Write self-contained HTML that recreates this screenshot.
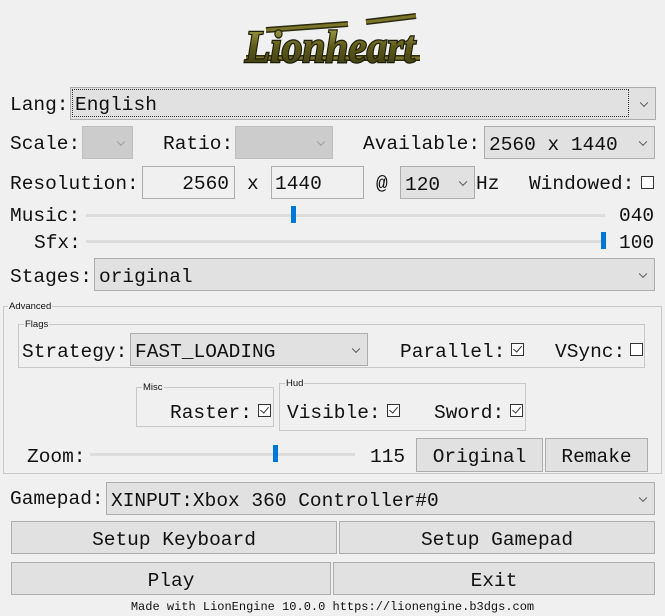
<!DOCTYPE html>
<html><head><meta charset="utf-8"><style>
body{margin:0;width:665px;height:616px;background:#f0f0f0;position:relative;overflow:hidden;font-family:"Liberation Mono",monospace;font-size:19.5px;color:#111}
.a{position:absolute;white-space:pre;line-height:1}
.cb{position:absolute;background:#e1e1e1;border:1px solid #adadad;box-sizing:border-box}
.cb.d{background:#cccccc;border-color:#bfbfbf}
.cb .t{position:absolute;left:4px;top:6px;white-space:pre}
.cb:after{content:"";position:absolute;right:8px;top:50%;width:5px;height:5px;border-right:1px solid #555;border-bottom:1px solid #555;transform:translateY(-70%) rotate(45deg)}
.cb.d:after{border-color:#999}
.ed{position:absolute;background:#f0f0f0;border:1px solid #adadad;box-sizing:border-box}
.btn{position:absolute;background:#e1e1e1;border:1px solid #adadad;box-sizing:border-box;text-align:center}
.btn span{position:relative;top:7px}
.chk{position:absolute;width:13px;height:13px;border:1px solid #333;box-sizing:border-box;background:#fff}
.chk.c:after{content:"";position:absolute;left:3px;top:0px;width:4px;height:7px;border-right:1px solid #333;border-bottom:1px solid #333;transform:rotate(40deg)}
.grp{position:absolute;border:1px solid #c8c8c8;box-sizing:border-box}
.gl{position:absolute;font-family:"Liberation Sans",sans-serif;font-size:9.5px;background:#f0f0f0;padding:0 1px;line-height:1}
.tr{position:absolute;height:3px;background:#dcdcdc}
.th{position:absolute;width:5px;height:17px;background:#0078d7}
</style></head><body>
<svg class="a" style="left:238px;top:6px" width="190" height="70" viewBox="0 0 190 70">
<defs><linearGradient id="g" x1="0" y1="0" x2="0" y2="1"><stop offset="0" stop-color="#b9b45a"/><stop offset=".5" stop-color="#5d5a1a"/><stop offset="1" stop-color="#3a3814"/></linearGradient></defs>
<path d="M8 52 L182 52 M28 24 L110 18 M128 16 L178 10" stroke="#2c2a10" stroke-width="6" fill="none"/>
<path d="M8 52 L182 52 M28 24 L110 18 M128 16 L178 10" stroke="#7a7528" stroke-width="3" fill="none"/>
<text x="92" y="56" text-anchor="middle" textLength="170" lengthAdjust="spacingAndGlyphs" font-family="Liberation Serif,serif" font-style="italic" font-weight="bold" font-size="46" fill="url(#g)" stroke="#1e1c08" stroke-width="2.5" paint-order="stroke">Lionheart</text>
</svg>

<div class="a" style="left:10px;top:96px">Lang:</div>
<div class="cb" style="left:70px;top:87px;width:586px;height:33px"><span class="t" style="outline:1px dotted #333;top:2px;left:2px;padding:4px 2px;width:555px;height:26px;box-sizing:border-box;padding-top:4px">English</span></div>

<div class="a" style="left:10px;top:135px">Scale:</div>
<div class="cb d" style="left:82px;top:126px;width:51px;height:33px"></div>
<div class="a" style="left:163px;top:135px">Ratio:</div>
<div class="cb d" style="left:235px;top:126px;width:98px;height:33px"></div>
<div class="a" style="left:363px;top:135px">Available:</div>
<div class="cb" style="left:484px;top:126px;width:171px;height:33px"><span class="t" style="top:7px">2560 x 1440</span></div>

<div class="a" style="left:10px;top:175px">Resolution:</div>
<div class="ed" style="left:142px;top:166px;width:93px;height:33px"><span class="a" style="right:5px;top:8px">2560</span></div>
<div class="a" style="left:247px;top:175px">x</div>
<div class="ed" style="left:271px;top:166px;width:93px;height:33px"><span class="a" style="left:3px;top:8px">1440</span></div>
<div class="a" style="left:376px;top:175px">@</div>
<div class="cb" style="left:400px;top:166px;width:75px;height:33px"><span class="t" style="top:7px">120</span></div>
<div class="a" style="left:476px;top:175px">Hz</div>
<div class="a" style="left:529px;top:175px">Windowed:</div>
<div class="chk" style="left:641px;top:176px"></div>

<div class="a" style="left:10px;top:207px">Music:</div>
<div class="tr" style="left:86px;top:214px;width:519px"></div>
<div class="th" style="left:291px;top:206px"></div>
<div class="a" style="left:619px;top:207px">040</div>
<div class="a" style="left:34px;top:234px">Sfx:</div>
<div class="tr" style="left:86px;top:240px;width:519px"></div>
<div class="th" style="left:601px;top:232px"></div>
<div class="a" style="left:619px;top:234px">100</div>

<div class="a" style="left:10px;top:268px">Stages:</div>
<div class="cb" style="left:94px;top:258px;width:561px;height:33px"><span class="t" style="top:7px">original</span></div>

<div class="grp" style="left:3px;top:306px;width:659px;height:168px"></div>
<div class="gl" style="left:8px;top:302px">Advanced</div>
<div class="grp" style="left:18px;top:324px;width:627px;height:44px"></div>
<div class="gl" style="left:24px;top:320px">Flags</div>
<div class="a" style="left:22px;top:343px">Strategy:</div>
<div class="cb" style="left:130px;top:333px;width:238px;height:33px"><span class="t" style="top:7px">FAST_LOADING</span></div>
<div class="a" style="left:400px;top:343px">Parallel:</div>
<div class="chk c" style="left:511px;top:343px"></div>
<div class="a" style="left:555px;top:343px">VSync:</div>
<div class="chk" style="left:630px;top:343px"></div>

<div class="grp" style="left:136px;top:387px;width:138px;height:40px"></div>
<div class="gl" style="left:142px;top:383px">Misc</div>
<div class="a" style="left:170px;top:404px">Raster:</div>
<div class="chk c" style="left:258px;top:404px"></div>
<div class="grp" style="left:279px;top:383px;width:247px;height:48px"></div>
<div class="gl" style="left:285px;top:379px">Hud</div>
<div class="a" style="left:287px;top:404px">Visible:</div>
<div class="chk c" style="left:387px;top:404px"></div>
<div class="a" style="left:434px;top:404px">Sword:</div>
<div class="chk c" style="left:510px;top:404px"></div>

<div class="a" style="left:27px;top:448px">Zoom:</div>
<div class="tr" style="left:90px;top:453px;width:265px"></div>
<div class="th" style="left:273px;top:445px"></div>
<div class="a" style="left:370px;top:448px">115</div>
<div class="btn" style="left:416px;top:438px;width:127px;height:34px"><span>Original</span></div>
<div class="btn" style="left:545px;top:438px;width:103px;height:34px"><span>Remake</span></div>

<div class="a" style="left:10px;top:490px">Gamepad:</div>
<div class="cb" style="left:106px;top:482px;width:549px;height:33px"><span class="t" style="top:7px">XINPUT:Xbox 360 Controller#0</span></div>

<div class="btn" style="left:11px;top:521px;width:326px;height:33px"><span>Setup Keyboard</span></div>
<div class="btn" style="left:339px;top:521px;width:316px;height:33px"><span>Setup Gamepad</span></div>
<div class="btn" style="left:11px;top:562px;width:320px;height:33px"><span>Play</span></div>
<div class="btn" style="left:333px;top:562px;width:322px;height:33px"><span>Exit</span></div>

<div class="a" style="left:0;width:665px;text-align:center;top:601px;font-size:12px">Made with LionEngine 10.0.0 https://lionengine.b3dgs.com</div>
</body></html>
